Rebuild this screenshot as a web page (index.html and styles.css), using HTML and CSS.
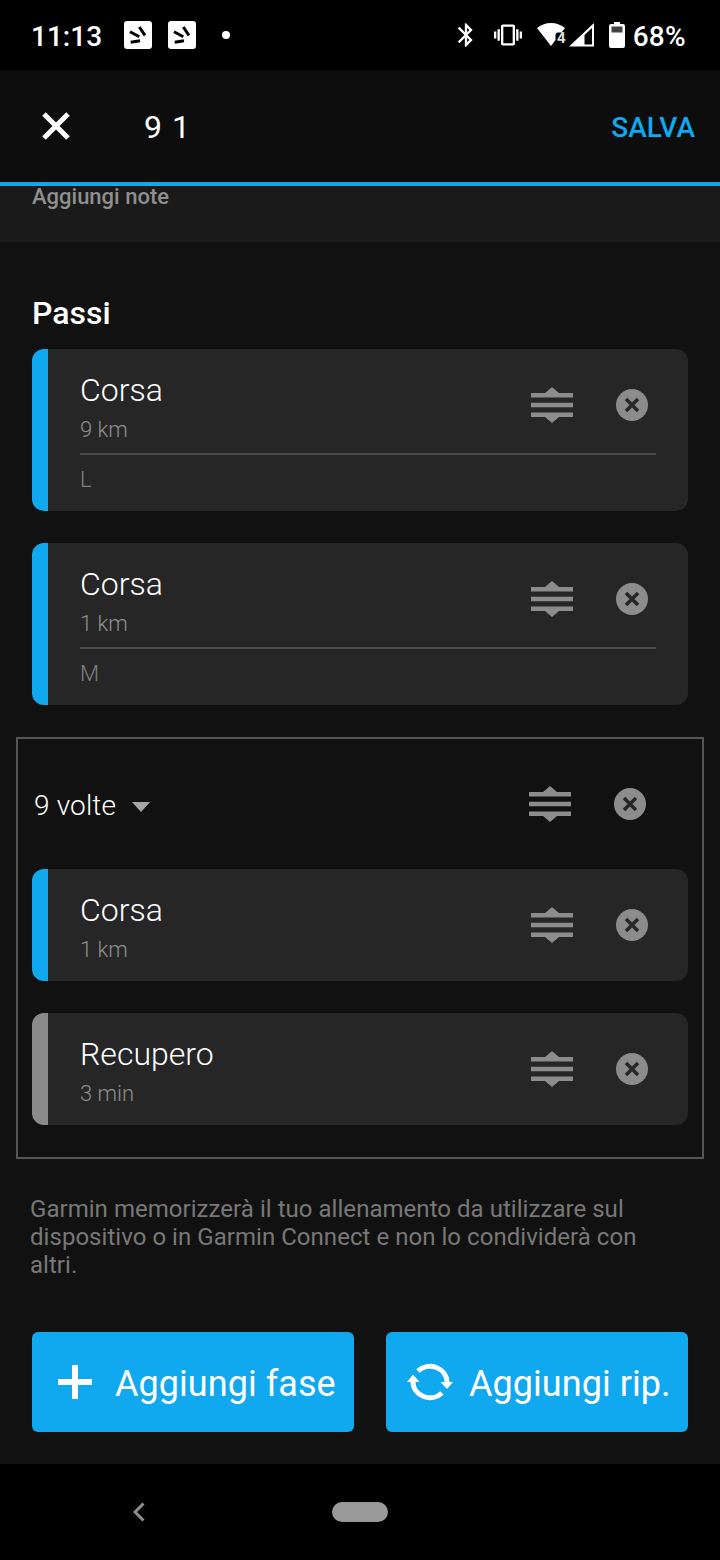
FILE: index.html
```html
<!DOCTYPE html>
<html lang="it">
<head>
<meta charset="utf-8">
<title>Allenamento</title>
<link rel="stylesheet" href="styles.css">
</head>
<body>
<svg class="defs" width="0" height="0" aria-hidden="true">
  <defs>
    <symbol id="reorder" viewBox="0 0 42 36">
      <path d="M21 0l7 6H14zM21 36l-7-6h14zM0 6h42v4.600H0zM0 15.700h42v4.600H0zM0 25.400h42V30H0z"/>
    </symbol>
    <symbol id="remove" viewBox="0 0 32 32">
      <circle cx="16" cy="16" r="16"/>
      <path class="remove-x" d="M10 10l12 12M22 10L10 22"/>
    </symbol>
    <symbol id="app" viewBox="0 0 28 28">
      <path d="M3 0h22a3 3 0 0 1 3 3v22a3 3 0 0 1-3 3H3a3 3 0 0 1-3-3V3a3 3 0 0 1 3-3z" fill="#fff"/>
      <path d="M6.700 21.200L16 19.800M6 10.700l9.300 5M15.300 6L21 14.300" fill="none" stroke="#000" stroke-width="3"/>
    </symbol>
  </defs>
</svg>

<header class="status">
  <div class="status-left">
    <span class="clock">11:13</span>
    <svg class="app-icon"><use href="#app"/></svg>
    <svg class="app-icon"><use href="#app"/></svg>
    <span class="dot"></span>
  </div>
  <div class="status-right">
    <svg class="sb-bt" viewBox="0 0 24 24"><path d="M17.710 7.710L12 2h-1v7.590L6.410 5 5 6.410 10.590 12 5 17.590 6.410 19 11 14.410V22h1l5.710-5.710-4.300-4.290 4.300-4.290zM13 5.830l1.880 1.880L13 9.590V5.830zm1.880 10.460L13 18.170v-3.760l1.880 1.880z"/></svg>
    <svg class="sb-vib" viewBox="0 0 24 24"><path d="M0 15h2V9H0v6zm3 2h2V7H3v10zm19-8v6h2V9h-2zm-3 8h2V7h-2v10zM16.500 3h-9C6.670 3 6 3.670 6 4.500v15c0 .83.67 1.500 1.500 1.500h9c.83 0 1.500-.67 1.500-1.500v-15c0-.83-.67-1.500-1.500-1.500zM16 19H8V5h8v14z"/></svg>
    <span class="wifi">
      <svg class="sb-wifi" viewBox="0 0 28 24"><path d="M0 5C3.500 2 8.500 0 14 0s10.500 2 14 5l-3.500 4.500H21a2.500 2.500 0 0 0-2.500 2.500v5L14 23z"/></svg>
      <span class="wifi-num">4</span>
    </span>
    <svg class="sb-signal" viewBox="0 0 26 24"><path d="M25 0L0 23.500h25zM23 5v16.500h-7.500V12z" fill-rule="evenodd"/></svg>
    <span class="batt">
      <svg class="sb-batt" viewBox="0 0 16 26"><path class="batt-empty" d="M2 4h12v7H2z"/><path d="M5 0h6v2h3a2 2 0 0 1 2 2v20a2 2 0 0 1-2 2H2a2 2 0 0 1-2-2V4a2 2 0 0 1 2-2h3zM2.500 4.500v6h11v-6z" fill-rule="evenodd"/></svg>
    </span>
    <span class="percent">68%</span>
  </div>
</header>

<div class="toolbar">
  <svg class="close" viewBox="0 0 30 30"><path d="M3 3l24 24M27 3L3 27"/></svg>
  <span class="title">9 1</span>
  <span class="save">SALVA</span>
</div>

<div class="notes">Aggiungi note</div>

<main class="content">
  <h2 class="section">Passi</h2>

  <article class="card run">
    <div class="card-body">
      <div class="card-top">
        <div class="card-text">
          <div class="card-name">Corsa</div>
          <div class="card-sub">9 km</div>
        </div>
        <svg class="reorder"><use href="#reorder"/></svg>
        <svg class="remove"><use href="#remove"/></svg>
      </div>
      <div class="card-note">L</div>
    </div>
  </article>

  <article class="card run">
    <div class="card-body">
      <div class="card-top">
        <div class="card-text">
          <div class="card-name">Corsa</div>
          <div class="card-sub">1 km</div>
        </div>
        <svg class="reorder"><use href="#reorder"/></svg>
        <svg class="remove"><use href="#remove"/></svg>
      </div>
      <div class="card-note">M</div>
    </div>
  </article>

  <section class="repeat">
    <div class="repeat-head">
      <span class="repeat-label">9 volte</span>
      <span class="caret"></span>
      <svg class="reorder"><use href="#reorder"/></svg>
      <svg class="remove"><use href="#remove"/></svg>
    </div>
    <article class="card run">
      <div class="card-body">
        <div class="card-top plain">
          <div class="card-text">
            <div class="card-name">Corsa</div>
            <div class="card-sub">1 km</div>
          </div>
          <svg class="reorder"><use href="#reorder"/></svg>
          <svg class="remove"><use href="#remove"/></svg>
        </div>
      </div>
    </article>
    <article class="card rest">
      <div class="card-body">
        <div class="card-top plain">
          <div class="card-text">
            <div class="card-name">Recupero</div>
            <div class="card-sub">3 min</div>
          </div>
          <svg class="reorder"><use href="#reorder"/></svg>
          <svg class="remove"><use href="#remove"/></svg>
        </div>
      </div>
    </article>
  </section>

  <p class="disclaimer">Garmin memorizzerà il tuo allenamento da utilizzare sul dispositivo o in Garmin Connect e non lo condividerà con altri.</p>

  <div class="actions">
    <button class="action action-add" type="button">
      <svg class="plus" viewBox="0 0 34 34"><path d="M14 0h6v14h14v6H20v14h-6V20H0v-6h14z"/></svg>
      <span class="action-label">Aggiungi fase</span>
    </button>
    <button class="action action-rep" type="button">
      <svg class="sync" viewBox="0 0 46 38">
        <path class="sync-arc" d="M40 19A17 16 0 0 0 11 8"/>
        <path class="sync-arc" d="M6 19A17 16 0 0 0 35 30"/>
        <path d="M0 19L6 11.500 12.500 19zM33.500 19H46L40 26z"/>
      </svg>
      <span class="action-label">Aggiungi rip.</span>
    </button>
  </div>
</main>

<nav class="navbar">
  <svg class="back" viewBox="0 0 12 20"><path d="M10.500 1.500L2 10l8.500 8.500"/></svg>
  <span class="pill"></span>
</nav>
</body>
</html>
```
FILE: styles.css
```css
* { box-sizing: border-box; }
html, body { margin: 0; padding: 0; }
body {
  width: 720px;
  height: 1560px;
  background: #111;
  color: #fff;
  font-family: Roboto, "Noto Sans", sans-serif;
  display: flex;
  flex-direction: column;
  overflow: hidden;
}
svg { display: block; flex: none; fill: currentColor; }
.defs { position: absolute; }

.status {
  height: 70px;
  flex: none;
  background: #000;
  display: flex;
  align-items: center;
  justify-content: space-between;
  padding: 0 34px 0 31px;
}
.status-left, .status-right { display: flex; align-items: center; }
.clock { font-size: 28px; font-weight: 500; width: 93px; padding-top: 2px; }
.app-icon { width: 28px; height: 28px; margin-right: 16px; }
.dot { width: 8px; height: 8px; border-radius: 50%; background: #fff; margin-left: 10px; }
.sb-bt { width: 28px; height: 28px; margin-right: 14px; }
.sb-vib { width: 28px; height: 28px; margin-right: 15px; }
.wifi { position: relative; width: 28px; height: 24px; margin-right: 4px; }
.sb-wifi { width: 28px; height: 24px; }
.wifi-num { position: absolute; right: -1px; bottom: 1px; font-size: 15px; font-weight: 700; line-height: 15px; color: #ddd; }
.sb-signal { width: 26px; height: 24px; margin-right: 14px; }
.batt { display: block; }
.sb-batt { width: 16px; height: 26px; margin-right: 8px; }
.batt-empty { fill: #444; }
.percent { font-size: 28px; font-weight: 500; padding-top: 2px; letter-spacing: .3px; }

.toolbar {
  height: 116px;
  flex: none;
  background: #0d0d0d;
  border-bottom: 4px solid #10a8ef;
  display: flex;
  align-items: center;
  padding: 0 25px 0 41px;
}
.close { width: 30px; height: 30px; fill: none; stroke: #fff; stroke-width: 5; }
.title { font-size: 32px; margin-left: 73px; padding-top: 2px; letter-spacing: 1px; flex: 1; font-weight: 400; }
.save { font-size: 28px; font-weight: 500; color: #10a8ef; padding-top: 2px; }

.notes {
  height: 56px;
  flex: none;
  background: #1a1a1a;
  color: #8f8f8f;
  font-size: 22px;
  font-weight: 500;
  line-height: 22px;
  padding: 0 32px;
}

.content { flex: 1; padding: 0 32px; }
.section { margin: 54px 0 19px; font-size: 32px; line-height: 34px; font-weight: 500; }

.card {
  border-radius: 12px;
  overflow: hidden;
  background: #262626;
  border-left: 16px solid #10a8ef;
  margin-bottom: 32px;
}
.card.rest { border-left-color: #8a8a8a; margin-bottom: 0; }
.card-body { padding: 0 32px; }
.card-top {
  height: 106px;
  padding-top: 8px;
  display: flex;
  align-items: center;
  border-bottom: 2px solid #4a4a4a;
}
.card-top.plain { height: 112px; padding-top: 0; border-bottom: 0; }
.card-text { flex: 1; padding-top: 3px; }
.card-name { font-size: 32px; font-weight: 300; line-height: 40px; color: #fff; }
.card-sub { font-size: 22px; font-weight: 300; line-height: 28px; margin-top: 6px; color: #8e8e8e; }
.card-note { height: 56px; font-size: 22px; font-weight: 300; line-height: 50px; color: #808080; }
.reorder { width: 42px; height: 36px; color: #8c8c8c; }
.remove { width: 32px; height: 32px; margin-left: 43px; margin-right: 8px; color: #8c8c8c; }
.remove-x { fill: none; stroke: #262626; stroke-width: 3.500; }

.repeat {
  margin: 0 -16px;
  height: 422px;
  border: 2px solid #555;
  padding: 0 14px;
}
.repeat-head {
  height: 130px;
  display: flex;
  align-items: center;
  padding: 0 32px 0 2px;
  margin-right: 2px;
}
.repeat-label { font-size: 28px; font-weight: 300; letter-spacing: .15px; padding-top: 2px; color: #fff; }
.caret {
  width: 0; height: 0;
  margin: 5px auto 0 16px;
  border-left: 9px solid transparent;
  border-right: 9px solid transparent;
  border-top: 10px solid #a6a6a6;
}

.disclaimer {
  margin: 36px 30px 0 -2px;
  font-size: 24px;
  line-height: 28px;
  font-weight: 400;
  letter-spacing: .04px;
  color: #787878;
}

.actions { display: flex; gap: 32px; margin-top: 53px; }
.action {
  height: 100px;
  border: 0;
  border-radius: 6px;
  background: #10a8ef;
  color: #fff;
  font-family: inherit;
  font-size: 36px;
  font-weight: 400;
  display: flex;
  align-items: center;
  padding: 0;
}
.action-label { padding-top: 4px; letter-spacing: .05px; }
.action-add { width: 322px; padding-left: 26px; gap: 23px; }
.action-rep { width: 302px; padding-left: 21px; gap: 16px; }
.plus { width: 34px; height: 34px; }
.sync { width: 46px; height: 38px; }
.sync-arc { fill: none; stroke: #fff; stroke-width: 5; }

.navbar {
  height: 96px;
  flex: none;
  background: #000;
  display: flex;
  align-items: center;
  padding: 0 0 1px 133px;
}
.back { width: 12px; height: 20px; fill: none; stroke: #8f8f8f; stroke-width: 3; }
.pill { width: 56px; height: 20px; border-radius: 10px; background: #9a9a9a; margin-left: 187px; }
```
